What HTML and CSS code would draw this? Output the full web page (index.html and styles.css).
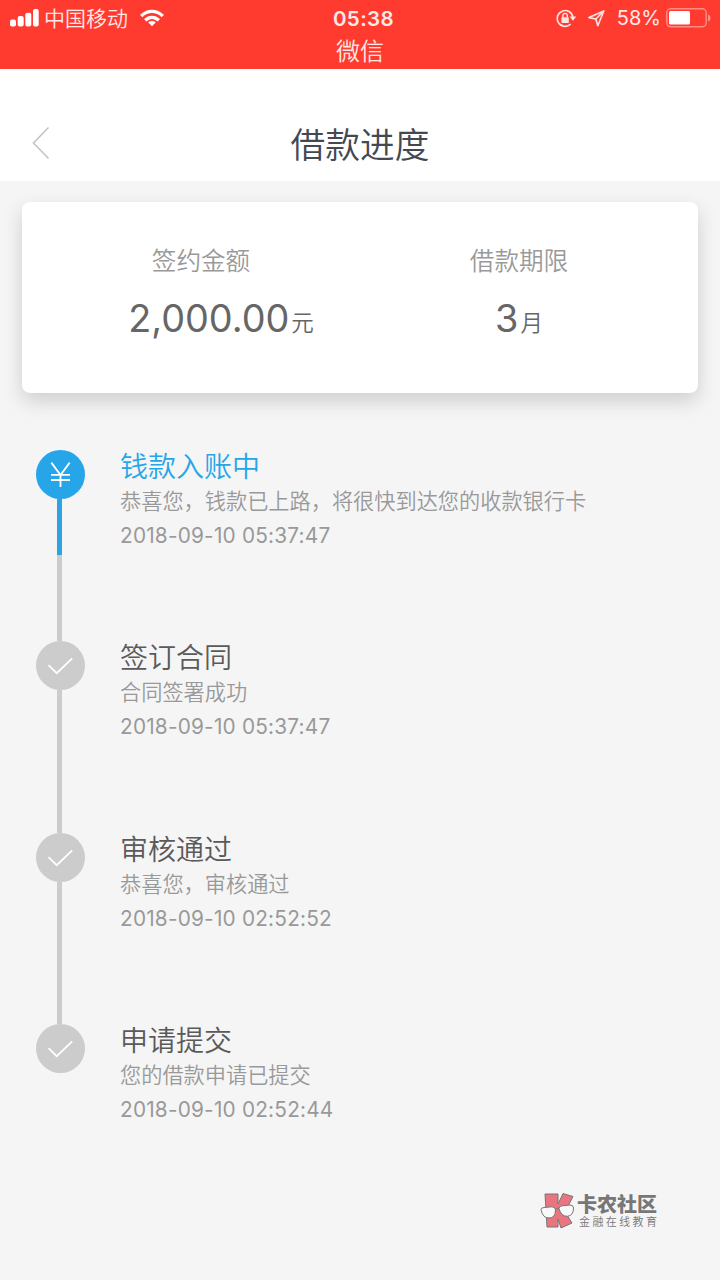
FILE: index.html
```
<!DOCTYPE html>
<html lang="zh-CN">
<head>
    <meta charset="UTF-8">
    <meta name="viewport" content="width=device-width, initial-scale=1.0">
    <title>借款进度</title>
    <link rel="stylesheet" href="styles.css">
</head>
<body>
    <header class="status-bar">
        <div class="status-row">
            <div class="status-left">
                <svg class="signal" width="29" height="18" viewBox="0 0 29 18" fill="#fff">
                    <rect x="0" y="10.5" width="6" height="7" rx="2"/>
                    <rect x="7.7" y="7" width="6" height="10.5" rx="2"/>
                    <rect x="15.3" y="3.7" width="6" height="13.8" rx="2"/>
                    <rect x="23" y="0" width="5.7" height="17.5" rx="2"/>
                </svg>
                <span class="carrier">中国移动</span>
                <svg class="wifi" width="24" height="18" viewBox="0 0 26 19" fill="none" stroke="#fff" stroke-width="3.6">
                    <path d="M1.3 7.4C8 0.6 18 0.6 24.7 7.4"/>
                    <path d="M5.6 12C10 7.7 16 7.7 20.4 12"/>
                    <path d="M13 18.4L8.8 14.2Q13 11.4 17.2 14.2Z" fill="#fff" stroke="none"/>
                </svg>
            </div>
            <div class="clock">05:38</div>
            <div class="status-right">
                <svg class="lock" width="20" height="19" viewBox="0 0 20 19" fill="none" stroke="#ffe5e2" stroke-width="1.6">
                    <path d="M16.9 8A7.9 7.9 0 1 0 14.6 15.2"/>
                    <path d="M13.6 7.6H20.2L17 11.8Z" fill="#ffe5e2" stroke="none"/>
                    <rect x="5.4" y="8.3" width="7.4" height="5.6" rx="0.6" fill="#ffe5e2" stroke="none"/>
                    <path d="M6.9 8.8V6.6a2.2 2.2 0 0 1 4.4 0V8.8" stroke-width="1.4"/>
                </svg>
                <svg class="arrow" width="17" height="17" viewBox="0 0 17 17" fill="none" stroke="#ffe5e2" stroke-width="1.6" stroke-linejoin="round">
                    <path d="M15.8 1L1 7.6L7.8 9L9.8 15.8Z"/>
                    <path d="M15.8 1L7.8 9"/>
                </svg>
                <span class="percent">58%</span>
                <svg class="battery" width="45" height="20" viewBox="0 0 45 20">
                    <rect x="0.8" y="0.8" width="39.4" height="18" rx="4" fill="none" stroke="#ff8c85" stroke-width="1.5"/>
                    <rect x="3" y="3" width="21" height="13.6" rx="1.5" fill="#fff"/>
                    <path d="M42 6.5C45.4 7.5 45.4 12.5 42 13.5Z" fill="#ff8c85"/>
                </svg>
            </div>
        </div>
        <div class="status-app">微信</div>
    </header>

    <nav class="navbar">
        <svg class="back" width="18" height="34" viewBox="0 0 18 34" fill="none" stroke="#c4c4c4" stroke-width="1.6">
            <path d="M16.5 1.5L1.5 17L16.5 32.5"/>
        </svg>
        <h1>借款进度</h1>
    </nav>

    <section class="card">
        <div class="card-item">
            <div class="label">签约金额</div>
            <div class="value">2,000.00<span class="unit">元</span></div>
        </div>
        <div class="card-item">
            <div class="label">借款期限</div>
            <div class="value month">3<span class="unit">月</span></div>
        </div>
    </section>

    <ul class="timeline">
        <li class="step active">
            <div class="track">
                <svg class="dot" width="49" height="49" viewBox="0 0 49 49" fill="none" stroke="#fff" stroke-width="1.8">
                    <path d="M15.3 12.6L24.5 25L33.7 12.6M24.5 25V37M15 24.8H34M15 30H34"/>
                </svg>
            </div>
            <div class="content">
                <h2>钱款入账中</h2>
                <p>恭喜您，钱款已上路，将很快到达您的收款银行卡</p>
                <time>2018-09-10 05:37:47</time>
            </div>
        </li>
        <li class="step">
            <div class="track">
                <svg class="dot" width="49" height="49" viewBox="0 0 49 49" fill="none" stroke="#fff" stroke-width="1.7">
                    <path d="M12.5 24.1L20.7 32.2L36.2 17.3"/>
                </svg>
            </div>
            <div class="content">
                <h2>签订合同</h2>
                <p>合同签署成功</p>
                <time>2018-09-10 05:37:47</time>
            </div>
        </li>
        <li class="step">
            <div class="track">
                <svg class="dot" width="49" height="49" viewBox="0 0 49 49" fill="none" stroke="#fff" stroke-width="1.7">
                    <path d="M12.5 24.1L20.7 32.2L36.2 17.3"/>
                </svg>
            </div>
            <div class="content">
                <h2>审核通过</h2>
                <p>恭喜您，审核通过</p>
                <time>2018-09-10 02:52:52</time>
            </div>
        </li>
        <li class="step">
            <div class="track">
                <svg class="dot" width="49" height="49" viewBox="0 0 49 49" fill="none" stroke="#fff" stroke-width="1.7">
                    <path d="M12.5 24.1L20.7 32.2L36.2 17.3"/>
                </svg>
            </div>
            <div class="content">
                <h2>申请提交</h2>
                <p>您的借款申请已提交</p>
                <time>2018-09-10 02:52:44</time>
            </div>
        </li>
    </ul>

    <footer class="brand">
        <svg width="35" height="37" viewBox="0 0 35 37" stroke="#777" stroke-width="1" stroke-linejoin="round">
            <path d="M5 2H18V12L23 1.5L33 4.5L25 20L32 31L21 36L18 27V35H7Z" fill="#e97580"/>
            <path d="M1 17.5Q1 15.800 4 15.500L12 14.800Q15.500 15 15.500 18Q15.500 26 9 26Q2.500 26 1 17.500Z" fill="#fafafa"/>
            <path d="M19 16.500Q19 14.300 22 13.800L30 13Q33.500 13 33.500 16Q33.500 23.500 27.500 24.300Q21 24.500 19 16.500Z" fill="#fafafa"/>
            <path d="M15.500 17.500Q17 15.500 19 16.500" fill="none"/>
        </svg>
        <div class="brand-text">
            <strong>卡农社区</strong>
            <span>金融在线教育</span>
        </div>
    </footer>
</body>
</html>
```

FILE: styles.css
```
* {
    box-sizing: border-box;
    margin: 0;
    padding: 0;
}
body {
    width: 720px;
    height: 1280px;
    overflow: hidden;
    background-color: #f5f5f5;
    font-family: Inter, "Noto Sans CJK SC", sans-serif;
    font-weight: 350;
    color: #999;
}
svg {
    display: block;
    flex: none;
}
.status-bar {
    height: 69px;
    background-color: #ff3b30;
    color: #ffe9e7;
}
.status-row {
    display: grid;
    grid-template-columns: 1fr auto 1fr;
    align-items: center;
    height: 36px;
    padding: 0 9px 0 10px;
}
.status-left,
.status-right {
    display: flex;
    align-items: center;
}
.status-right {
    justify-content: flex-end;
}
.carrier {
    margin: 0 12px 0 5px;
    padding-top: 2px;
    font-size: 21px;
    line-height: 34px;
}
.clock {
    padding-left: 6px;
    font-size: 20.5px;
    font-weight: 600;
    letter-spacing: 0.4px;
}
.arrow {
    margin-left: 12px;
}
.percent {
    margin: 0 5px 0 12px;
    font-size: 20px;
    font-weight: 400;
}
.status-app {
    margin-top: 1px;
    font-size: 24px;
    line-height: 30px;
    text-align: center;
}
.navbar {
    display: grid;
    grid-template-columns: 18px 1fr 18px;
    align-items: center;
    height: 112px;
    padding: 36px 32px 0;
    background-color: #fff;
}
.navbar h1 {
    padding-top: 3px;
    font-size: 34.7px;
    font-weight: 350;
    line-height: 50px;
    text-align: center;
    color: #444851;
}
.card {
    display: grid;
    grid-template-columns: 358px 278px;
    height: 191px;
    margin: 21px 22px 0;
    padding-top: 41px;
    background-color: #fff;
    border-radius: 8px;
    box-shadow: 0 8px 20px rgba(0, 0, 0, 0.16);
}
.card-item {
    text-align: center;
}
.label {
    font-size: 24.6px;
    line-height: 36px;
}
.value {
    padding-left: 40px;
    margin-top: 14px;
    font-size: 37.8px;
    font-weight: 400;
    line-height: 50px;
    color: #666;
}
.month {
    padding-left: 0;
}
.unit {
    margin-left: 2px;
    font-size: 22.5px;
    font-weight: 350;
    vertical-align: 1px;
}
.timeline {
    margin-top: 57px;
    padding-left: 36px;
    list-style: none;
}
.step {
    display: flex;
    gap: 35px;
    height: 191.3px;
}
.track {
    display: flex;
    flex-direction: column;
    align-items: center;
    width: 49px;
}
.track::after {
    content: "";
    flex: 1;
    width: 5px;
    margin-right: 2px;
    background-color: #ccc;
}
.dot {
    background-color: #ccc;
    border-radius: 50%;
}
.active .dot {
    background-color: #27a5e9;
}
.active .track::after {
    background: linear-gradient(#2fa3e0 56px, #ccc 56px);
}
.step:last-child {
    height: 175px;
}
.step:last-child .track::after {
    display: none;
}
.content {
    padding-top: 1px;
}
.content h2 {
    font-size: 28px;
    font-weight: 350;
    line-height: 32px;
    color: #5a5a5a;
}
.active h2 {
    color: #27a5e9;
}
.content p {
    font-size: 21.2px;
    line-height: 36px;
}
.content time {
    display: block;
    font-size: 20.8px;
    font-weight: 400;
    letter-spacing: 0.2px;
    line-height: 34px;
}
.brand {
    display: flex;
    margin: -7px 0 0 540px;
    color: #777;
}
.brand-text {
    display: flex;
    flex-direction: column;
    padding: 1px 0 0 2px;
}
.brand strong {
    font-size: 20px;
    font-weight: 900;
    line-height: 24px;
}
.brand span {
    padding-left: 2px;
    font-size: 11px;
    letter-spacing: 2.4px;
    line-height: 10px;
}
```
